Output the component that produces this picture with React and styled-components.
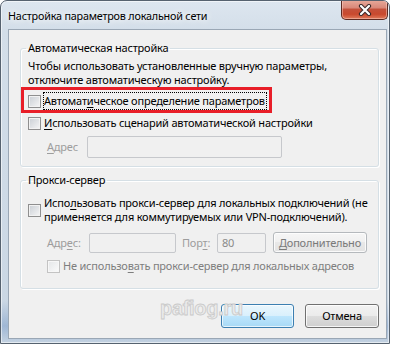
import React from 'react'
import styled, { createGlobalStyle } from 'styled-components'

const GlobalStyle = createGlobalStyle`
  html, body {
    margin: 0;
    padding: 0;
    background: #fff;
  }
  body {
    font-family: "Noto Sans", "DejaVu Sans", sans-serif;
    font-size: 11px;
    letter-spacing: -0.2px;
    color: #000;
  }
`

const Window = styled.div`
  box-sizing: border-box;
  width: 390px;
  height: 344px;
  border: 1px solid #56626f;
  border-radius: 7px 7px 0 0;
  background:
    linear-gradient(to bottom, rgba(60, 110, 180, 0) 300px, rgba(60, 110, 180, 0.3) 325px, rgba(60, 110, 180, 0) 344px),
    linear-gradient(to bottom, #dde6ef 0, #d3dee9 30px, #c9d6e3 100%);
  box-shadow: inset 0 0 0 1px rgba(255, 255, 255, 0.55);
  display: flex;
  flex-direction: column;
  overflow: hidden;
`

const TitleBar = styled.div`
  height: 28px;
  display: flex;
  align-items: flex-start;
  padding: 0 1px 0 7px;
`

const Title = styled.div`
  margin-top: 7px;
  line-height: 16px;
  font-size: 10.8px;
  letter-spacing: -0.2px;
  text-shadow: 0 0 6px #fff, 0 0 10px #fff;
`

const CloseButton = styled.div`
  margin-left: auto;
  margin-top: -1px;
  box-sizing: border-box;
  width: 47px;
  height: 20px;
  border: 1px solid #5c2a22;
  border-top: none;
  border-radius: 0 0 5px 5px;
  background: linear-gradient(to bottom, #e8ab9c 0, #d9897a 40%, #c4503a 50%, #c9492e 75%, #e07b5c 100%);
  box-shadow: inset 0 0 0 1px rgba(255, 220, 210, 0.45);
  display: flex;
  align-items: center;
  justify-content: center;
`

const Client = styled.div`
  position: relative;
  flex: 1;
  margin: 0 2px 4px 7px;
  border: 1px solid #9aa7b5;
  background: #f0f0f0;
  padding: 11px 7px 0 11px;
  display: flex;
  flex-direction: column;
`

const Group = styled.fieldset`
  margin: ${p => (p.$first ? '0' : '6px 0 0')};
  padding: 3px 0 ${p => p.$bottom}px 7px;
  border: 1px solid #d5dfe5;
  border-radius: 3px;
  box-shadow: inset 1px 1px 0 #fff, 1px 1px 0 #fff;
  min-width: 0;
`

const Legend = styled.legend`
  padding: 0 2px;
  margin-left: -2px;
  line-height: 14px;
`

const Para = styled.div`
  margin-top: 1px;
  line-height: 14px;
  white-space: nowrap;
`

const Row = styled.div`
  position: relative;
  display: flex;
  align-items: center;
  margin-top: ${p => p.$top || 0}px;
  padding-left: ${p => p.$indent || 0}px;
`

const Box = styled.span`
  box-sizing: border-box;
  flex: none;
  width: 13px;
  height: 13px;
  border: 1px solid ${p => (p.$disabled ? '#c3c3c3' : '#8f8f8f')};
  background: ${p =>
    p.$disabled
      ? 'linear-gradient(135deg, #e4e6e8, #fbfbfb)'
      : 'linear-gradient(135deg, #c9ced4, #f6f6f6)'};
  box-shadow: inset 0 0 0 1px ${p => (p.$disabled ? '#f7f7f7' : '#f2f2f2')};
`

const Label = styled.span`
  flex: none;
  margin-left: 2px;
  padding: 1px 1px 1px 0;
  border: 1px ${p => (p.$focused ? 'dotted #000' : 'solid transparent')};
  line-height: 14px;
  white-space: nowrap;
  color: ${p => (p.$disabled ? '#7e7e7e' : '#000')};
`

const FieldLabel = styled.span`
  flex: none;
  width: ${p => p.$width}px;
  margin-left: ${p => p.$gap || 0}px;
  line-height: 14px;
  white-space: nowrap;
  color: #9d9d9d;
`

const Input = styled.div`
  box-sizing: border-box;
  flex: none;
  width: ${p => p.$width}px;
  height: ${p => p.$height}px;
  border: 1px solid #c6c8cc;
  border-radius: 2px;
  background: #f0f0f0;
  padding-left: 4px;
  line-height: ${p => p.$height - 2}px;
  color: #8a8a8a;
`

const Key = styled.span`
  text-decoration: underline;
  text-underline-offset: 2px;
`

const Highlight = styled.div`
  position: absolute;
  left: -7px;
  top: -5px;
  width: 251px;
  height: 26px;
  box-sizing: border-box;
  border: 3px solid #e81e28;
  pointer-events: none;
`

const Button = styled.div`
  box-sizing: border-box;
  flex: none;
  width: ${p => p.$width}px;
  height: ${p => p.$height || 23}px;
  margin-left: ${p => p.$gap || 0}px;
  border: 1px solid ${p => (p.$primary ? '#3c7fb1' : p.$disabled ? '#b5b9bd' : '#707070')};
  border-radius: 3px;
  background: ${p =>
    p.$primary
      ? 'linear-gradient(to bottom, #eaf6fd 0, #d9f0fc 50%, #bee6fd 50%, #a7d9f5 100%)'
      : p.$disabled
      ? 'linear-gradient(to bottom, #f6f6f6 0, #f0f0f0 50%, #e8e8e8 50%, #e3e3e3 100%)'
      : 'linear-gradient(to bottom, #f2f2f2 0, #ebebeb 50%, #dddddd 50%, #cfcfcf 100%)'};
  box-shadow: inset 0 0 0 1px ${p => (p.$primary ? 'rgba(255,255,255,0.7)' : 'rgba(255,255,255,0.8)')};
  display: flex;
  align-items: center;
  justify-content: center;
  color: ${p => (p.$disabled ? '#7a7a7a' : '#000')};
  line-height: 14px;
  white-space: nowrap;
`

const Buttons = styled.div`
  display: flex;
  justify-content: flex-end;
  margin-top: 15px;
`

const Watermark = styled.div`
  position: absolute;
  left: 151px;
  top: 268px;
  font-family: "Liberation Sans", sans-serif;
  font-size: 20px;
  line-height: 20px;
  font-weight: bold;
  color: #ebebeb;
  -webkit-text-stroke: 0.8px #c9c9c9;
  pointer-events: none;
  letter-spacing: -0.3px;
`

const CloseIcon = () => (
  <svg width="14" height="12" viewBox="0 0 14 12">
    <path d="M3 2 L11 10 M11 2 L3 10" stroke="#3a2a2a" strokeWidth="4.2" strokeLinecap="round" />
    <path d="M3 2 L11 10 M11 2 L3 10" stroke="#fff" strokeWidth="2.2" strokeLinecap="round" />
  </svg>
)

export default function App() {
  return (
    <>
      <GlobalStyle />
      <Window>
        <TitleBar>
          <Title>Настройка параметров локальной сети</Title>
          <CloseButton>
            <CloseIcon />
          </CloseButton>
        </TitleBar>
        <Client>
          <Group $first $bottom={8}>
            <Legend>Автоматическая настройка</Legend>
            <Para>
              Чтобы использовать установленные вручную параметры,
              <br />
              отключите автоматическую настройку.
            </Para>
            <Row $top={5}>
              <Box />
              <Label $focused>
                Автомат<Key>и</Key>ческое определение параметров
              </Label>
              <Highlight />
            </Row>
            <Row $top={4}>
              <Box />
              <Label>
                <Key>И</Key>спользовать сценарий автоматической настройки
              </Label>
            </Row>
            <Row $top={4}>
              <FieldLabel $gap={19} $width={40}>
                <Key>А</Key>дрес
              </FieldLabel>
              <Input $width={195} $height={22} />
            </Row>
          </Group>
          <Group $bottom={13}>
            <Legend>Прокси-сервер</Legend>
            <Row $top={4}>
              <Box />
              <Label>
                Испо<Key>л</Key>ьзовать прокси-сервер для локальных подключений (не
                <br />
                применяется для коммутируемых или VPN-подключений).
              </Label>
            </Row>
            <Row $top={6}>
              <FieldLabel $gap={19} $width={42}>
                Адр<Key>е</Key>с:
              </FieldLabel>
              <Input $width={87} $height={20} />
              <FieldLabel $gap={6} $width={35}>
                Пор<Key>т</Key>:
              </FieldLabel>
              <Input $width={49} $height={20}>80</Input>
              <Button $disabled $gap={7} $width={94} $height={21}>
                <span>
                  <Key>Д</Key>ополнительно
                </span>
              </Button>
            </Row>
            <Row $top={4} $indent={19}>
              <Box $disabled />
              <Label $disabled>
                Не использо<Key>в</Key>ать прокси-сервер для локальных адресов
              </Label>
            </Row>
          </Group>
          <Buttons>
            <Button $primary $width={73} $height={24}>OK</Button>
            <Button $gap={11} $width={74} $height={24}>Отмена</Button>
          </Buttons>
          <Watermark>pafiog.ru</Watermark>
        </Client>
      </Window>
    </>
  )
}
